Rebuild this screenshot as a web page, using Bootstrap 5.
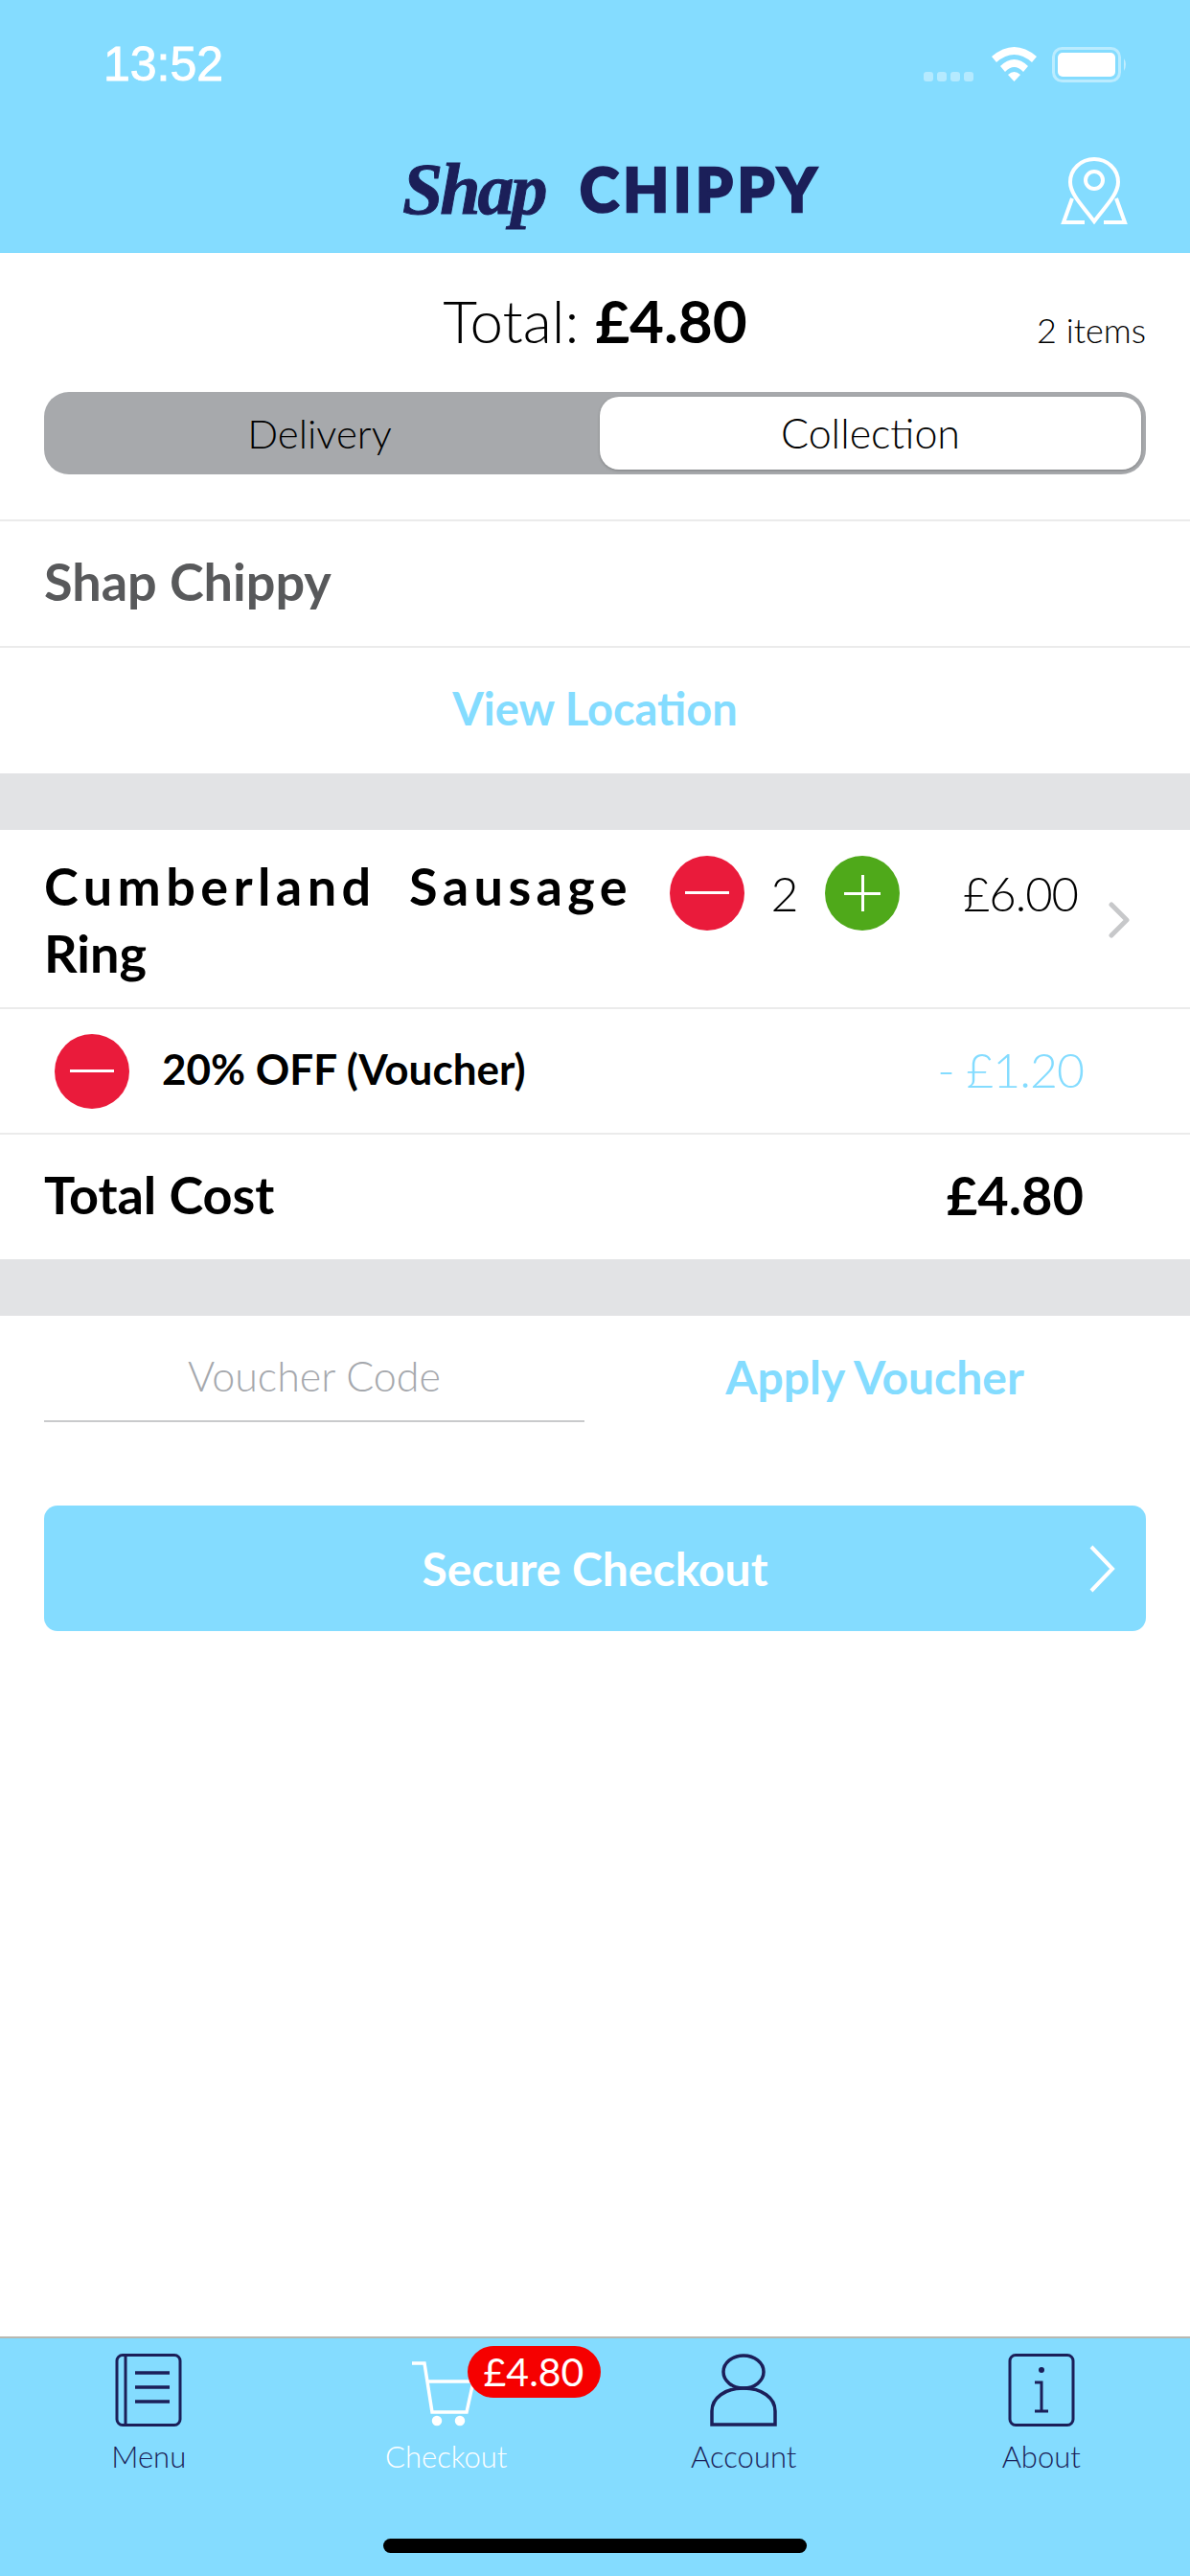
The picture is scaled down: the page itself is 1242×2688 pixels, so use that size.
<!DOCTYPE html>
<html lang="en">
<head>
    <meta charset="UTF-8">
    <meta name="viewport" content="width=device-width, initial-scale=1.0">
    <title>Shap Chippy - Basket</title>
    <link rel="stylesheet" href="https://cdn.jsdelivr.net/npm/bootstrap@5.3.0/dist/css/bootstrap.min.css">
    <style>
        html, body { margin: 0; background: #fff; }
        body { font-family: "Lato", "Liberation Sans", sans-serif; color: #000; }
        .app-screen { width: 1242px; height: 2688px; overflow: hidden; }

        /* header */
        .app-head { height: 264px; background: #84dcff; }
        .status-row { height: 146px; padding: 49px 65px 0 108px; }
        .clock { font: 400 50px/36px "Liberation Sans", sans-serif; color: #fff; -webkit-text-stroke: .9px #fff; }
        .signal-dots { margin: 26px 19px 0 0; }
        .signal-dots i { display: block; width: 10px; height: 10px; border-radius: 3px; background: rgba(255,255,255,.4); }
        .brand-row { padding-left: 420px; padding-right: 65px; }
        .brand-script { font: italic 700 76px/70px "Liberation Serif", serif; color: #1b1f59; letter-spacing: -3px; width: 185px; -webkit-text-stroke: 1px #1b1f59; }
        .brand-block { font: 900 62px/70px "Lato", sans-serif; color: #1b1f59; letter-spacing: 4.5px; -webkit-text-stroke: 2.5px #1b1f59; }
        .brand-pin { margin-top: 18px; }

        /* total and delivery switch */
        .total-row { display: grid; grid-template-columns: 1fr auto 1fr; align-items: baseline; height: 145px; padding: 34px 46px 0; }
        .total-text { font-size: 62px; font-weight: 300; line-height: 72px; }
        .total-text b { font-weight: 700; }
        .items-text { font-size: 36px; font-weight: 300; text-align: right; }
        .mode-switch { height: 86px; margin: 0 46px 47px; background: #a7a9ac; border-radius: 26px; padding: 5px; }
        .mode-option { flex: 1; font-size: 42px; font-weight: 300; line-height: 76px; text-align: center; padding-right: 10px; }
        .mode-option.is-on { flex: 0 0 565px; padding-right: 0; font-size: 43px; background: #fff; border-radius: 20px; box-shadow: 0 1px 3px rgba(0,0,0,.25); }

        /* rows */
        .line-row { border-top: 2px solid #ebebeb; padding-left: 46px; }
        .place-row { height: 132px; font-size: 54px; font-weight: 700; color: #58595b; line-height: 126px; }
        .view-row { height: 133px; font-size: 47px; font-weight: 700; color: #84dcff; line-height: 126px; padding: 0; text-align: center; }
        .gap-band { height: 59px; background: #e2e3e5; }
        .item-row { height: 185px; padding: 24px 0 0 46px; }
        .item-name { flex: 0 0 653px; font-size: 54px; font-weight: 700; line-height: 70px; }
        .item-name span { letter-spacing: 5.4px; word-spacing: 16px; }
        .round-btn { flex: 0 0 78px; width: 78px; height: 78px; border-radius: 50%; }
        .item-row .round-btn { margin-top: 3px; }
        .round-red { background: #ea1b3b; }
        .round-green { background: #4fa91a; }
        .qty-num { width: 84px; margin-top: 3px; font-size: 50px; font-weight: 300; text-align: center; line-height: 78px; }
        .item-price { width: 186px; margin-top: 3px; font-size: 49px; font-weight: 300; line-height: 78px; text-align: right; letter-spacing: -1px; }
        .item-more { margin: 51px 0 0 31px; }
        .voucher-row { height: 131px; padding-left: 57px; padding-right: 111px; }
        .voucher-name { margin: 0 0 5px 34px; font-size: 44px; font-weight: 700; }
        .voucher-off { margin-bottom: 3px; font-size: 50px; font-weight: 300; color: #84dcff; letter-spacing: -1px; }
        .sum-row { height: 132px; padding: 0 111px 5px 46px; font-size: 54px; font-weight: 700; }
        .sum-value { font-size: 56px; }

        /* voucher form */
        .code-row { height: 198px; padding: 0 46px; }
        .code-input { width: 564px; height: 111px; border: 0; border-bottom: 2px solid #c9cacc; border-radius: 0; font-size: 43px; font-weight: 300; text-align: center; color: #000; background: transparent; padding: 16px 0 0; outline: 0; }
        .code-input::placeholder { color: #a5a8ad; }
        .code-apply { flex: 1; height: 110px; margin-left: 20px; font-size: 48px; font-weight: 700; color: #84dcff; line-height: 128px; text-align: center; }
        .pay-btn { height: 131px; margin: 0 46px; background: #84dcff; border-radius: 14px; position: relative; color: #fff; font-size: 48px; font-weight: 700; line-height: 131px; text-align: center; }
        .pay-arrow { position: absolute; right: 31px; top: 40px; }

        /* tab bar */
        .tab-bar { height: 250px; background: #84dcff; border-top: 2px solid #b8b8b0; position: relative; }
        .tab-cell { width: 25%; padding-top: 16px; text-align: center; color: #1b1f59; font-size: 31px; font-weight: 300; line-height: 36px; position: relative; }
        .tab-cell svg { display: block; margin: 0 auto 13px; height: 76px; }
        .tab-cell.is-on { color: #fff; }
        .price-pill { position: absolute; left: 177px; top: 8px; width: 139px; height: 54px; border-radius: 27px; background: #f60000; color: #fff; font-size: 41px; font-weight: 400; line-height: 54px; }
        .home-bar { position: absolute; left: 400px; bottom: 24px; width: 442px; height: 15px; border-radius: 8px; background: #000; }
    </style>
</head>
<body>
    <div class="app-screen d-flex flex-column">
        <header class="app-head">
            <div class="status-row d-flex align-items-start">
                <div class="clock">13:52</div>
                <div class="signal-dots d-flex gap-1 ms-auto"><i></i><i></i><i></i><i></i></div>
                <svg width="47" height="36" viewBox="0 0 47 36" class="me-3" fill="#fff">
                    <path d="M0 10 Q23.500 -10 47 10 L42 16 Q23.500 0 5 16Z"/>
                    <path d="M9 20 Q23.500 6 38 20 L33 26 Q23.500 16 14 26Z"/>
                    <path d="M17 29 Q23.500 23 30 29 L23.500 36Z"/>
                </svg>
                <svg width="79" height="37" viewBox="0 0 79 37">
                    <rect x="1.500" y="1.500" width="69" height="34" rx="9" fill="none" stroke="#fff" stroke-opacity=".45" stroke-width="3"/>
                    <rect x="6" y="6" width="60" height="25" rx="5" fill="#fff"/>
                    <path d="M75 12 Q79 18 75 25Z" fill="#fff" fill-opacity=".5"/>
                </svg>
            </div>
            <div class="brand-row d-flex align-items-start">
                <div class="brand-script mt-3">Shap</div>
                <div class="brand-block mt-3">CHIPPY</div>
                <svg class="brand-pin ms-auto" width="70" height="70" viewBox="0 0 70 70" fill="none" stroke="#fff" stroke-width="4">
                    <path d="M35 67 C24 52 10 39 10 26 A25 24 0 0 1 60 26 C60 39 46 52 35 67Z"/>
                    <circle cx="35" cy="24" r="9"/>
                    <path d="M12 43 L3 68 H25 M58 43 L67 68 H45"/>
                </svg>
            </div>
        </header>

        <main class="flex-grow-1">
            <div class="total-row">
                <div></div>
                <div class="total-text">Total: <b>£4.80</b></div>
                <div class="items-text">2 items</div>
            </div>
            <div class="mode-switch d-flex">
                <div class="mode-option">Delivery</div>
                <div class="mode-option is-on">Collection</div>
            </div>

            <div class="line-row place-row">Shap Chippy</div>
            <div class="line-row view-row">View Location</div>
            <div class="gap-band"></div>

            <div class="item-row d-flex align-items-start">
                <div class="item-name"><span>Cumberland Sausage</span> Ring</div>
                <div class="round-btn round-red d-flex align-items-center justify-content-center">
                    <svg width="46" height="4"><rect width="46" height="3" y="0" fill="#fff"/></svg>
                </div>
                <div class="qty-num">2</div>
                <div class="round-btn round-green d-flex align-items-center justify-content-center">
                    <svg width="38" height="38" fill="#fff"><rect y="18" width="38" height="3"/><rect x="18" width="3" height="38"/></svg>
                </div>
                <div class="item-price">£6.00</div>
                <svg class="item-more" width="24" height="38" fill="none" stroke="#c7c8ca" stroke-width="5" stroke-linecap="round" stroke-linejoin="round"><path d="M4 3 L20 19 L4 35"/></svg>
            </div>

            <div class="line-row voucher-row d-flex align-items-center">
                <div class="round-btn round-red d-flex align-items-center justify-content-center">
                    <svg width="46" height="4"><rect width="46" height="3" fill="#fff"/></svg>
                </div>
                <div class="voucher-name">20% OFF (Voucher)</div>
                <div class="voucher-off ms-auto">- £1.20</div>
            </div>
            <div class="line-row sum-row d-flex align-items-center justify-content-between">
                <div>Total Cost</div>
                <div class="sum-value">£4.80</div>
            </div>
            <div class="gap-band"></div>

            <div class="code-row d-flex align-items-start">
                <input class="code-input" type="text" placeholder="Voucher Code">
                <div class="code-apply">Apply Voucher</div>
            </div>
            <div class="pay-btn">
                Secure Checkout
                <svg class="pay-arrow" width="30" height="52" fill="none" stroke="#fff" stroke-width="4"><path d="M4 3 L26 26 L4 49"/></svg>
            </div>
        </main>

        <nav class="tab-bar d-flex">
            <div class="tab-cell">
                <svg width="70" height="76" viewBox="0 0 70 76" fill="none" stroke="#1b1f59" stroke-width="3">
                    <rect x="2" y="1.500" width="66" height="73" rx="6"/>
                    <path d="M11 2 V74"/>
                    <path d="M21 20 H57 M21 35 H57 M21 50 H57" stroke-width="3.500"/>
                </svg>
                Menu
            </div>
            <div class="tab-cell is-on">
                <svg width="72" height="76" viewBox="0 0 72 76" fill="none" stroke="#fff" stroke-width="3.500">
                    <path d="M-1 10 H13 L21 61 H57 L64 29 H17"/>
                    <circle cx="26" cy="70" r="3.500" fill="#fff"/>
                    <circle cx="50" cy="70" r="3.500" fill="#fff"/>
                </svg>
                Checkout
                <div class="price-pill">£4.80</div>
            </div>
            <div class="tab-cell">
                <svg width="70" height="76" viewBox="0 0 70 76" fill="none" stroke="#1b1f59" stroke-width="3.500">
                    <ellipse cx="35" cy="19" rx="21" ry="17"/>
                    <path d="M2 74 V60 C2 46 16 36 35 36 C54 36 68 46 68 60 V74Z"/>
                </svg>
                Account
            </div>
            <div class="tab-cell">
                <svg width="70" height="76" viewBox="0 0 70 76" fill="none" stroke="#1b1f59" stroke-width="3">
                    <rect x="2" y="1.500" width="66" height="73" rx="6"/>
                    <circle cx="35" cy="17" r="3" fill="#1b1f59" stroke="none"/>
                    <path d="M28 30 H35 V60 M28 60 H42"/>
                </svg>
                About
            </div>
            <div class="home-bar"></div>
        </nav>
    </div>
    <script src="https://cdn.jsdelivr.net/npm/bootstrap@5.3.0/dist/js/bootstrap.bundle.min.js"></script>
</body>
</html>
